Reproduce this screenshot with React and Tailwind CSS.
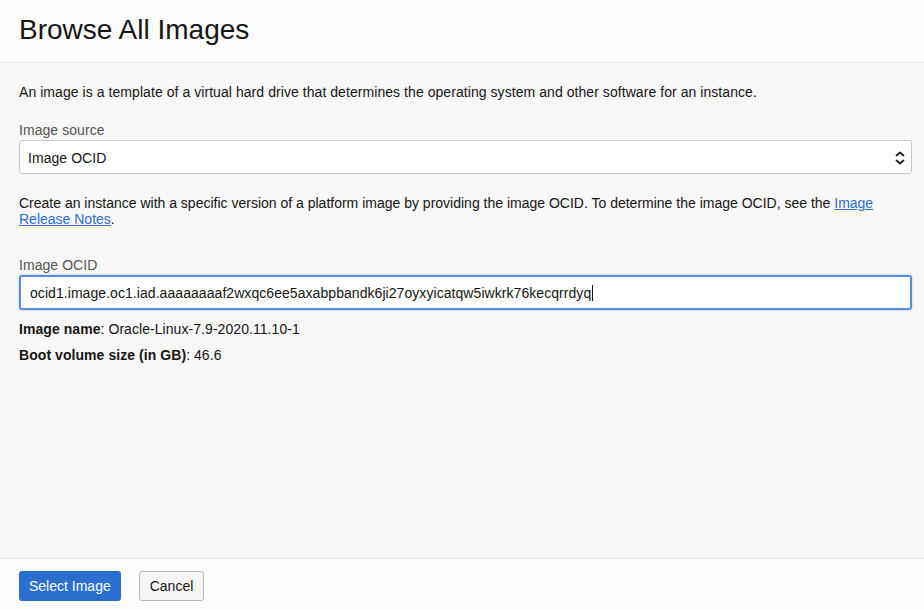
const font = { fontFamily: '"Liberation Sans", Arial, sans-serif' };

const OCID = 'ocid1.image.oc1.iad.aaaaaaaaf2wxqc6ee5axabpbandk6ji27oyxyicatqw5iwkrk76kecqrrdyq';

function Label({ children }) {
  return <div className="text-[14px] leading-4 text-[#555555] mb-[2px]">{children}</div>;
}

export default function App() {
  return (
    <div className="flex h-[609px] w-[924px] flex-col bg-[#f7f7f7] text-[#161513]" style={font}>
      <header className="h-[63px] shrink-0 border-b border-[#e4e4e4] bg-[#fcfcfc] px-[19px] pt-[14px]">
        <h1 className="text-[28px] leading-8 text-[#161513]">Browse All Images</h1>
      </header>

      <main className="flex-1 px-[19px] pt-[21px] tracking-[0.06px]">
        <p className="text-[14px] leading-4">
          An image is a template of a virtual hard drive that determines the operating system and other software for an instance.
        </p>

        <div className="mt-[22px]">
          <Label>Image source</Label>
          <div className="relative h-[34px] rounded-[3px] border border-[#c7c7c7] bg-white w-[893px]">
            <div className="px-[8px] pt-[9px] text-[14px] leading-4">Image OCID</div>
            <svg className="absolute right-[5px] top-[9px]" width="12" height="16" viewBox="0 0 12 16" fill="none" stroke="#222" strokeWidth="1.8" strokeLinecap="round" strokeLinejoin="round">
              <path d="M2.5 5.5 6 2.5l3.5 3" />
              <path d="M2.5 10.5 6 13.5l3.5-3" />
            </svg>
          </div>
        </div>

        <p className="mt-[21px] text-[14px] leading-4 tracking-normal">
          Create an instance with a specific version of a platform image by providing the image OCID. To determine the image OCID, see the{' '}
          <a href="#" className="text-[#2a6fcf] underline">Image</a>
          <br />
          <a href="#" className="text-[#2a6fcf] underline">Release Notes</a>.
        </p>

        <div className="mt-[30px]">
          <Label>Image OCID</Label>
          <div className="h-[35px] w-[893px] rounded-[3px] border-2 border-[#5b8bd9] bg-white shadow-[0_0_2px_#8fb1e8] flex items-center px-[9px]">
            <span className="text-[14px] leading-4">{OCID}</span>
            <span className="ml-px inline-block h-[16px] w-px bg-[#161513]" />
          </div>
        </div>

        <p className="mt-[11px] text-[14px] leading-4">
          <b>Image name</b>: Oracle-Linux-7.9-2020.11.10-1
        </p>
        <p className="mt-[10px] text-[14px] leading-4">
          <b>Boot volume size (in GB)</b>: 46.6
        </p>
      </main>

      <footer className="h-[51px] shrink-0 border-t border-[#e4e4e4] bg-[#fcfcfc] px-[19px] pt-[12px] flex gap-[18px] items-start">
        <button className="h-[30px] rounded-[3px] bg-[#2a6fcf] px-[10px] text-[14px] text-white">Select Image</button>
        <button className="h-[30px] rounded-[3px] border border-[#b9b9b9] bg-[#f5f5f5] px-[10px] text-[14px] text-[#161513]">Cancel</button>
      </footer>
    </div>
  );
}
